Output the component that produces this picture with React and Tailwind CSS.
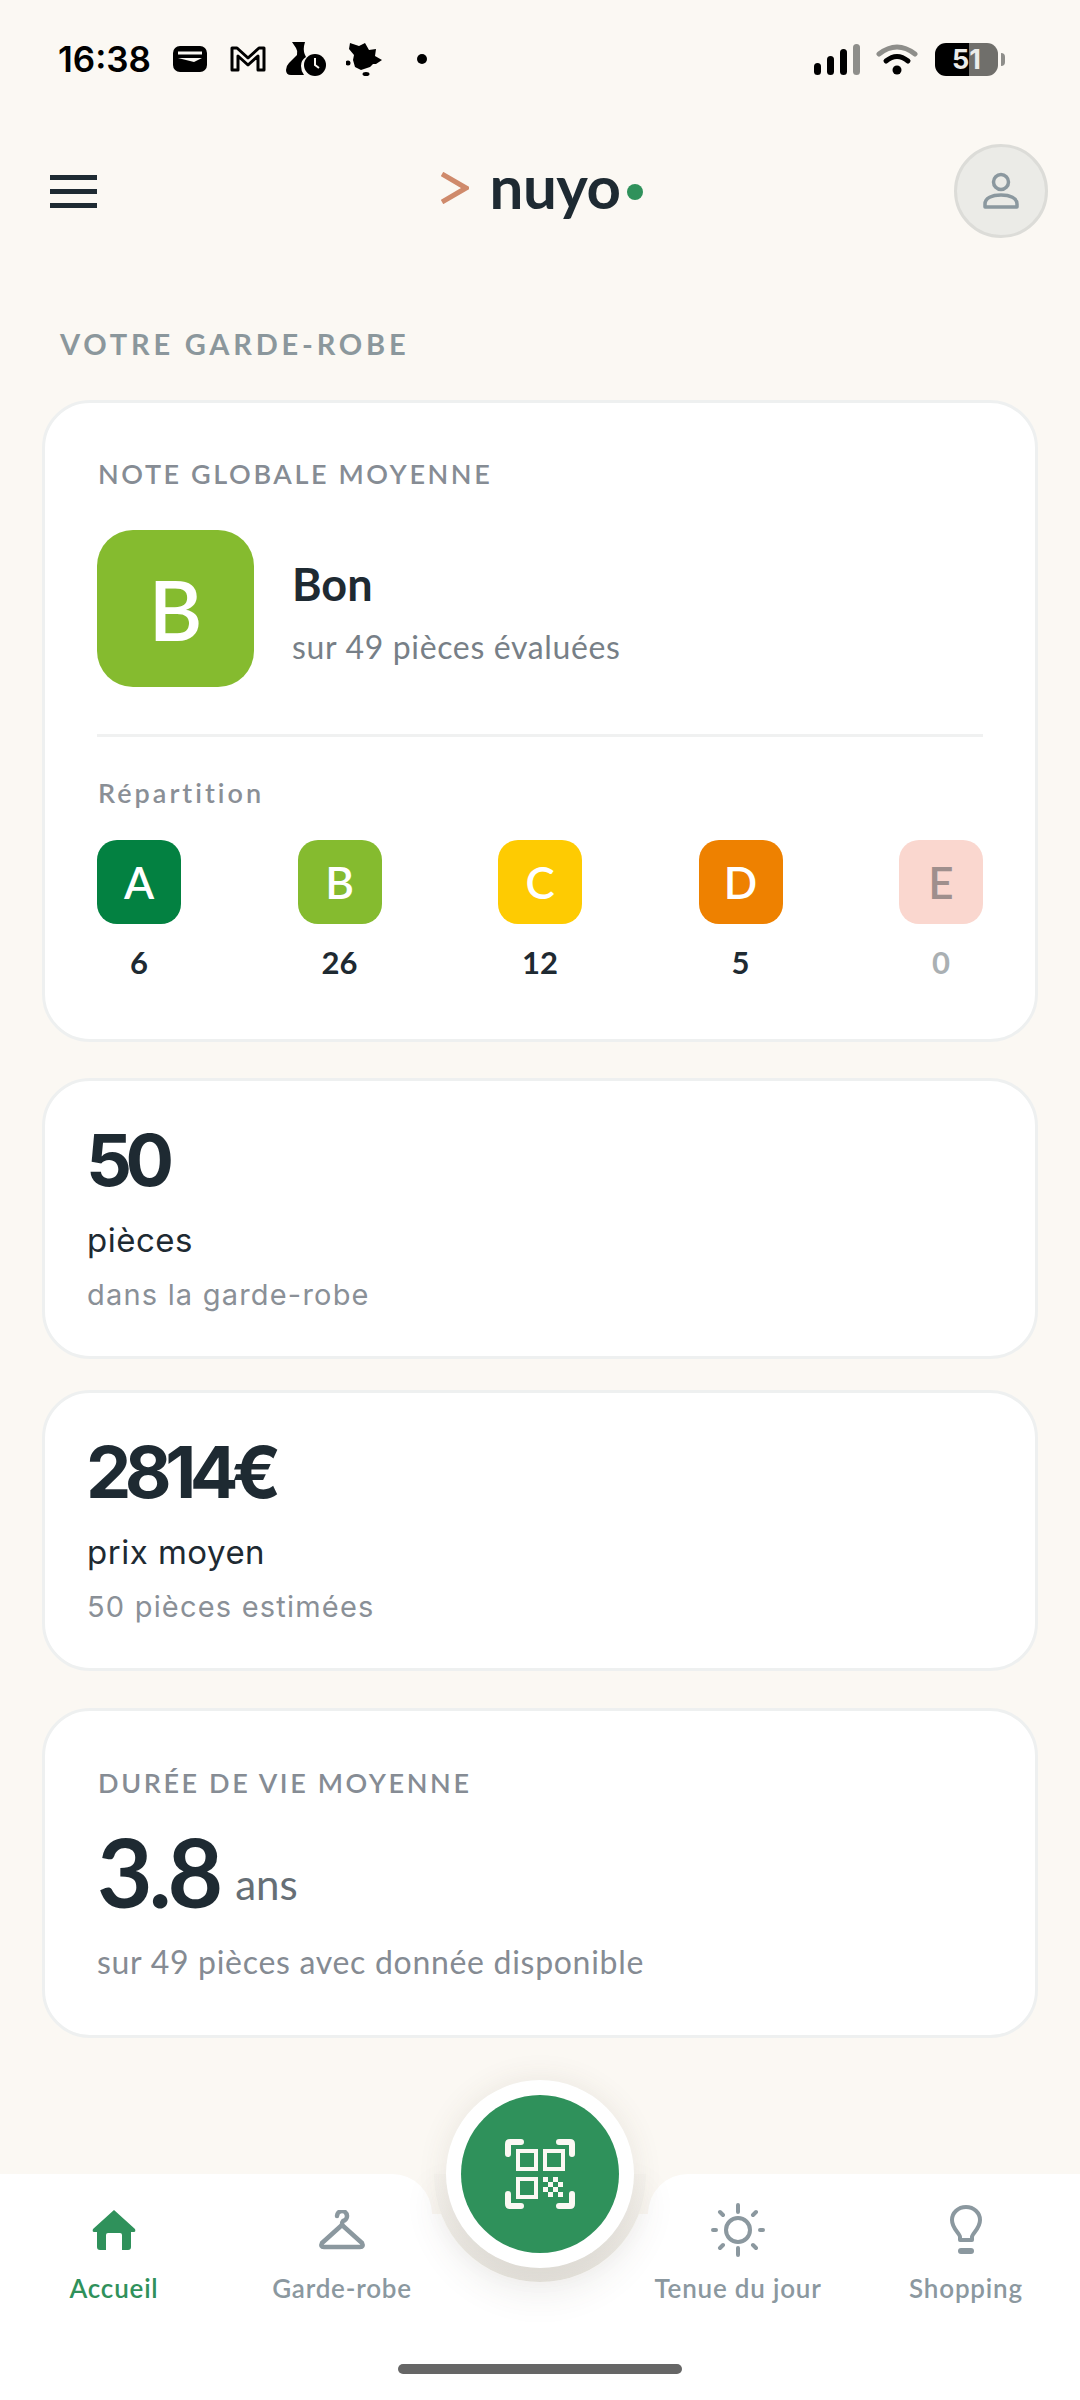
import React from 'react';

const GRADES = [
  { letter: 'A', count: 6, bg: 'bg-[#038141]', text: 'text-white', num: 'text-[#1e2a32]' },
  { letter: 'B', count: 26, bg: 'bg-[#85bb2f]', text: 'text-white', num: 'text-[#1e2a32]' },
  { letter: 'C', count: 12, bg: 'bg-[#fecb02]', text: 'text-white', num: 'text-[#1e2a32]' },
  { letter: 'D', count: 5, bg: 'bg-[#ee8100]', text: 'text-white', num: 'text-[#1e2a32]' },
  { letter: 'E', count: 0, bg: 'bg-[#fad7cf]', text: 'text-[#9f8f8d]', num: 'text-[#aab0b3]' },
];

const StatusBar = () => (
  <div className="flex items-center justify-between h-[118px] pl-[58px] pr-[75px] text-black">
    <div className="flex items-center">
      <span className="w-[115px] text-[35px] leading-none font-semibold font-['Inter']">16:38</span>
      {/* wallet */}
      <svg width="34" height="26" viewBox="0 0 34 26" className="mr-[23px]">
        <path fillRule="evenodd" d="M7 0h20a7 7 0 0 1 7 7v12a7 7 0 0 1-7 7H7a7 7 0 0 1-7-7V7a7 7 0 0 1 7-7zM5 5.500v3h24v-3zM5 12l16 4 8-4z" fill="#000" />
      </svg>
      {/* mail */}
      <svg width="36" height="26" viewBox="0 0 36 26" className="mr-[20px]">
        <path d="M2 24V2h5l11 10L29 2h5v22h-6V10l-10 9-10-9v14z" fill="none" stroke="#000" strokeWidth="3" strokeLinejoin="round" />
      </svg>
      {/* flask and clock */}
      <svg width="40" height="34" viewBox="0 0 40 34" className="mr-[20px]">
        <path d="M6 0h13l-1 4q-1 6 2 11 -5 3-5 9 0 5 3 9H5q-5 0-5-5 0-4 3-7l8-8q1-4-1-7z" fill="#000" />
        <circle cx="29" cy="23" r="11" fill="#000" />
        <path d="M29 16v7l4 3" fill="none" stroke="#fbf8f3" strokeWidth="2" />
      </svg>
      {/* leaf */}
      <svg width="36" height="33" viewBox="0 0 36 33" className="mr-[35px]">
        <path d="M4 0l9 3 6-3 4 7 7-1-1 7 7 4-6 4-3 0-3 3-9 3-6-3-2-7 1-5-5-6z" fill="#000" />
        <circle cx="2" cy="20" r="2.500" fill="#000" />
        <ellipse cx="20" cy="31" rx="3.500" ry="2" fill="#000" />
      </svg>
      <span className="w-[10px] h-[10px] rounded-full bg-black" />
    </div>
    <div className="flex items-center">
      {/* signal */}
      <div className="flex items-end gap-[6px] h-[31px] mr-[16px]">
        <span className="w-[7px] h-[12px] rounded-full bg-black" />
        <span className="w-[7px] h-[19px] rounded-full bg-black" />
        <span className="w-[7px] h-[26px] rounded-full bg-black" />
        <span className="w-[7px] h-[31px] rounded-full bg-[#8e8e8a]" />
      </div>
      {/* wifi */}
      <svg width="42" height="32" viewBox="0 0 42 32" className="mr-[17px]">
        <path d="M3 11Q21 -3 39 11" fill="none" stroke="#8e8e8a" strokeWidth="5" strokeLinecap="round" />
        <path d="M10 18Q21 9 32 18" fill="none" stroke="#000" strokeWidth="5" strokeLinecap="round" />
        <circle cx="21" cy="27" r="4.500" fill="#000" />
      </svg>
      {/* battery */}
      <div className="relative flex w-[63px] h-[33px] rounded-[11px] overflow-hidden">
        <span className="w-[34px] bg-black" />
        <span className="flex-1 bg-[#706f6b]" />
        <span className="absolute inset-0 flex items-center justify-center text-[#ececea] text-[27px] leading-none font-bold font-['Inter']">51</span>
      </div>
      <span className="ml-[3px] w-[4px] h-[13px] rounded-r-full bg-[#8e8e8a]" />
    </div>
  </div>
);

const Header = () => (
  <div className="flex items-center justify-between h-[94px] mt-[26px] pl-[50px] pr-[32px]">
    <div className="flex flex-col gap-[9px] w-[47px]">
      <span className="h-[5px] bg-[#1e2a32]" />
      <span className="h-[5px] bg-[#1e2a32]" />
      <span className="h-[5px] bg-[#1e2a32]" />
    </div>
    <div className="flex items-center ml-[33px]">
      <svg width="28" height="32" viewBox="0 0 28 32" className="mr-[21px] mt-[-6px]">
        <path d="M1 2l24 14L1 30" fill="none" stroke="#cf8a6b" strokeWidth="5" />
      </svg>
      <span className="text-[60px] leading-none font-bold tracking-[-0.5px] text-[#1e2a32] font-['Lato'] mt-[-11px]">nuyo</span>
      <span className="w-[16px] h-[16px] rounded-full bg-[#2f915b] ml-[7px] mt-[1px]" />
    </div>
    <div className="flex items-center justify-center w-[94px] h-[94px] rounded-full bg-[#ebebe7] border-[3px] border-[#dcdcd8]">
      <svg width="38" height="38" viewBox="0 0 38 38" fill="none" stroke="#8b989f" strokeWidth="3.500">
        <circle cx="19" cy="10" r="7.500" />
        <path d="M3 35v-3c0-6 7-9 16-9s16 3 16 9v3z" strokeLinejoin="round" />
      </svg>
    </div>
  </div>
);

const Card = ({ className = '', children }) => (
  <div className={`bg-white border-[3px] border-[#eef0f0] rounded-[48px] ${className}`}>{children}</div>
);

const GlobalCard = () => (
  <Card className="mt-[38px] px-[52px] pt-[53px] pb-[59px] font-['Lato']">
    <div className="ml-[1px] text-[27px] leading-[36px] font-semibold tracking-[2.6px] text-[#868c94]">NOTE GLOBALE MOYENNE</div>
    <div className="flex items-center mt-[38px]">
      <div className="flex items-center justify-center w-[157px] h-[157px] rounded-[36px] bg-[#85bb2f] text-white text-[82px] leading-none font-semibold">B</div>
      <div className="ml-[38px] pt-[6px]">
        <div className="text-[45px] leading-[56px] font-bold text-[#1e2a32]">Bon</div>
        <div className="mt-[15px] text-[32px] leading-[40px] tracking-[0.65px] text-[#777f87]">sur 49 pièces évaluées</div>
      </div>
    </div>
    <div className="h-[3px] mt-[47px] bg-[#f0f1f1]" />
    <div className="ml-[1px] mt-[40px] text-[27px] leading-[32px] font-semibold tracking-[3px] text-[#8a8f96]">Répartition</div>
    <div className="flex justify-between mt-[31px]">
      {GRADES.map((g) => (
        <div key={g.letter} className="flex flex-col items-center w-[84px]">
          <div className={`flex items-center justify-center w-[84px] h-[84px] rounded-[20px] text-[44px] leading-none font-semibold ${g.bg} ${g.text}`}>{g.letter}</div>
          <div className={`mt-[20px] text-[31px] leading-[36px] font-bold ${g.num}`}>{g.count}</div>
        </div>
      ))}
    </div>
  </Card>
);

const StatCard = ({ value, label, sub, className = '' }) => (
  <Card className={`pl-[42px] pr-[41px] pt-[43px] pb-[43px] font-['Inter'] ${className}`}>
    <div className="text-[72px] leading-[72px] font-bold tracking-[-6.5px] text-[#1e2a32] ml-[-1px]">{value}</div>
    <div className="mt-[24px] text-[33px] leading-[40px] font-normal tracking-[0.5px] text-[#1e2a32]">{label}</div>
    <div className="mt-[17px] text-[29px] leading-[36px] tracking-[1.2px] text-[#8a9097]">{sub}</div>
  </Card>
);

const LifespanCard = () => (
  <Card className="mt-[37px] px-[52px] pt-[54px] pb-[53px] font-['Lato']">
    <div className="ml-[1px] text-[27px] leading-[36px] font-semibold tracking-[2.6px] text-[#868c94]">DURÉE DE VIE MOYENNE</div>
    <div className="flex items-center mt-[22px] h-[96px]">
      <span className="text-[96px] leading-[96px] font-bold tracking-[-4px] text-[#1e2a32]">3.8</span>
      <span className="ml-[16px] mt-[26px] text-[42px] leading-none text-[#666f76]">ans</span>
    </div>
    <div className="mt-[23px] text-[32px] leading-[40px] tracking-[0.7px] text-[#858b93]">sur 49 pièces avec donnée disponible</div>
  </Card>
);

const HomeIcon = () => (
  <svg width="44" height="40" viewBox="0 0 44 40" fill="#2f915b">
    <path d="M22 0L43 19q1 3-1 3h-3v15q0 3-3 3h-6V25q0-2-2-2H16q-2 0-2 2v15H8q-3 0-3-3V22H2q-2 0-1-3z" />
  </svg>
);

const HangerIcon = () => (
  <svg width="50" height="40" viewBox="0 0 50 40" fill="none" stroke="#8b989f" strokeWidth="4.500" strokeLinecap="round" strokeLinejoin="round">
    <path d="M20 6a5 5 0 1 1 6 5q-1 1-1 4" />
    <path d="M25 15L5 33q-2 4 2 4h36q4 0 2-4z" />
  </svg>
);

const SunIcon = () => (
  <svg width="54" height="54" viewBox="0 0 54 54" fill="none" stroke="#8b989f" strokeWidth="4" strokeLinecap="round">
    <circle cx="27" cy="27" r="12" />
    <path d="M27 2v7M27 45v7M2 27h3M49 27h3M9 9l3 3M42 42l3 3M45 9l-3 3M12 42l-3 3" />
  </svg>
);

const BulbIcon = () => (
  <svg width="36" height="50" viewBox="0 0 36 50" fill="none" stroke="#8b989f" strokeWidth="4" strokeLinecap="round" strokeLinejoin="round">
    <path d="M12 35v-3c0-4-8-8-8-17a14 13 0 0 1 28 0c0 9-8 13-8 17v3z" />
    <path d="M13 46h10" strokeWidth="6" />
  </svg>
);

const QrIcon = () => (
  <svg width="70" height="70" viewBox="0 0 70 70" fill="none" stroke="#fbf8f3">
    <path d="M3 15V5q0-2 2-2h11M54 3h11q2 0 2 2v10M3 55v10q0 2 2 2h11M67 55v10q0 2-2 2H54" strokeWidth="6" strokeLinecap="round" />
    <rect x="13" y="12" width="18" height="18" strokeWidth="4" />
    <rect x="40" y="12" width="18" height="18" strokeWidth="4" />
    <rect x="13" y="40" width="18" height="18" strokeWidth="4" />
    <path d="M38 38h5v5h-5zM48 38h5v5h-5zM43 43h5v5h-5zM53 43h5v5h-5zM38 48h5v5h-5zM48 48h5v5h-5zM43 53h5v5h-5zM53 53h5v5h-5z" fill="#fbf8f3" stroke="none" />
  </svg>
);

const Tab = ({ icon, label, active, className = '' }) => (
  <div className={`flex flex-col items-center ${className}`}>
    <div className="flex items-center justify-center h-[56px]">{icon}</div>
    <span className={`mt-[14px] text-[26px] leading-[32px] font-semibold tracking-[0.8px] font-['Lato'] ${active ? 'text-[#2f915b]' : 'text-[#8b989f]'}`}>{label}</span>
  </div>
);

const BottomNav = () => (
  <div className="relative flex h-[226px]">
    <div className="flex gap-[24px] w-[432px] pt-[28px] bg-white rounded-tr-[40px]">
      <Tab icon={<HomeIcon />} label="Accueil" active className="w-[228px]" />
      <Tab icon={<HangerIcon />} label="Garde-robe" className="w-[180px]" />
    </div>
    <div className="flex flex-col w-[216px] pt-[40px]">
      <div className="flex-1 bg-white" />
    </div>
    <div className="flex gap-[48px] w-[432px] pt-[28px] bg-white rounded-tl-[40px]">
      <Tab icon={<SunIcon />} label="Tenue du jour" className="w-[180px]" />
      <Tab icon={<BulbIcon />} label="Shopping" className="w-[180px]" />
    </div>
    {/* notch behind the scan button */}
    <div className="absolute left-[434px] top-0 w-[212px] h-[108px] rounded-b-[106px] bg-linear-to-b from-[#f6f3ee] to-[#e3e0da] shadow-[0_14px_34px_rgba(80,70,50,0.08)]" />
    <div className="absolute left-[446px] top-[-94px] flex items-center justify-center w-[188px] h-[188px] rounded-full bg-white shadow-[0_0_30px_rgba(80,70,50,0.1)]">
      <div className="flex items-center justify-center w-[158px] h-[158px] rounded-full bg-[#2f915b]">
        <QrIcon />
      </div>
    </div>
    <div className="absolute left-[398px] top-[190px] w-[284px] h-[10px] rounded-full bg-[#666666]" />
  </div>
);

export default function App() {
  return (
    <div className="flex flex-col w-[1080px] h-[2400px] overflow-hidden bg-[#fbf8f3]">
      <StatusBar />
      <Header />
      <main className="flex-1 px-[42px]">
        <div className="mt-[88px] ml-[18px] text-[29px] leading-[36px] font-bold tracking-[3.8px] text-[#8b979c] font-['Lato']">VOTRE GARDE-ROBE</div>
        <GlobalCard />
        <StatCard value="50" label="pièces" sub="dans la garde-robe" className="mt-[36px]" />
        <StatCard value="2814€" label="prix moyen" sub="50 pièces estimées" className="mt-[31px]" />
        <LifespanCard />
      </main>
      <BottomNav />
    </div>
  );
}
